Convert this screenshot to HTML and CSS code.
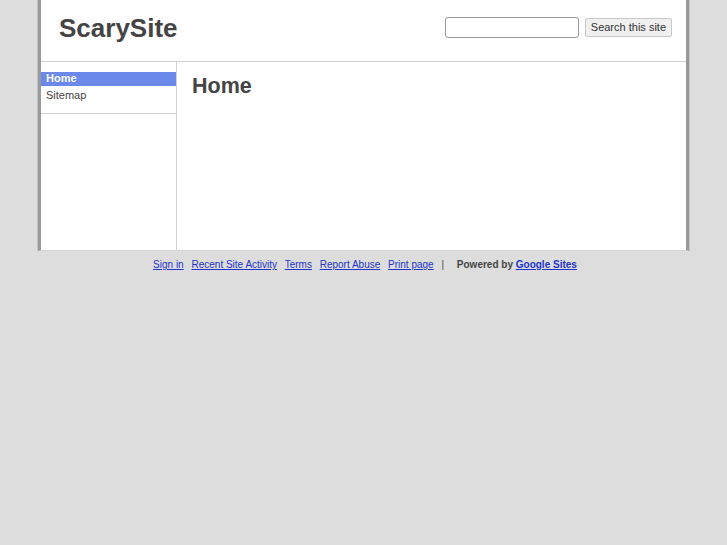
FILE: index.html
```html
<!DOCTYPE html>
<html lang="en">
<head>
  <meta charset="UTF-8" />
  <title>Home (ScarySite)</title>
  <link rel="stylesheet" href="styles.css">
</head>
<body>

<div class="wrapper">
  <div class="header">
    <div class="site-title">ScarySite</div>
    <form class="search">
      <input type="text" class="search-box" />
      <button type="button" class="search-btn">Search this site</button>
    </form>
  </div>

  <div class="content">
    <div class="nav">
      <ul class="nav-list">
        <li class="active">Home</li>
        <li>Sitemap</li>
      </ul>
    </div>
    <div class="main">
      <h1>Home</h1>
    </div>
  </div>
</div>

<div class="footer">
  <a href="#">Sign in</a>
  <a href="#">Recent Site Activity</a>
  <a href="#">Terms</a>
  <a href="#">Report Abuse</a>
  <a href="#">Print page</a>
  <span class="sep">|</span>
  <span class="powered">Powered by <a href="#">Google Sites</a></span>
</div>

</body>
</html>
```

FILE: styles.css
```css
body {
  margin: 0;
  background-color: #dddddd;
  font-family: 'Liberation Sans', Arial, sans-serif;
  color: #444;
}

.wrapper {
  width: 645px;
  margin: 0 auto;
  background-color: #fff;
  border-left: 3px solid #999;
  border-right: 3px solid #999;
  border-bottom: 1px solid #d4d4d4;
  box-shadow: -1px 0 0 #c4c4c4, 1px 0 0 #c4c4c4;
}

.header {
  height: 61px;
  border-bottom: 1px solid #d0d0d0;
  display: flex;
  align-items: center;
  justify-content: space-between;
  padding: 0 14px 0 18px;
}

.site-title {
  font-size: 26px;
  font-weight: bold;
  color: #444;
  margin-top: -5px;
}

.search {
  display: flex;
  align-items: center;
  gap: 6px;
  margin: 0 0 7px 0;
}

.search-box {
  width: 130px;
  height: 17px;
  border: 1px solid #999;
  border-radius: 3px;
  padding: 1px;
}

.search-btn {
  font-family: 'Liberation Sans', Arial, sans-serif;
  font-size: 11px;
  color: #333;
  background: #f0f0f0;
  border: 1px solid #c8c8c8;
  border-radius: 2px;
  height: 19px;
  padding: 0 5px;
}

.content {
  display: flex;
  height: 188px;
}

.nav {
  width: 135px;
  border-right: 1px solid #d0d0d0;
  padding-top: 10px;
}

.nav-list {
  list-style: none;
  margin: 0;
  padding: 0 0 7px 0;
  border-bottom: 1px solid #d0d0d0;
  font-size: 11px;
}

.nav-list li {
  padding: 1px 5px;
  height: 14px;
  line-height: 13px;
  color: #444;
  margin-bottom: 2px;
}

.nav-list li.active {
  background-color: #6a89ea;
  color: #fff;
  font-weight: bold;
  height: 14px;
  padding: 0 5px;
}

.main {
  flex: 1;
  padding-left: 15px;
}

h1 {
  font-size: 21.5px;
  margin: 12px 0 0 0;
  color: #444;
}

.footer {
  text-align: center;
  font-size: 10px;
  padding-top: 8px;
  padding-left: 8px;
}

.footer a {
  color: #2233cc;
  margin-right: 5px;
}

.sep {
  color: #444;
  margin-right: 10px;
}

.powered {
  font-weight: bold;
  color: #444;
}
```
